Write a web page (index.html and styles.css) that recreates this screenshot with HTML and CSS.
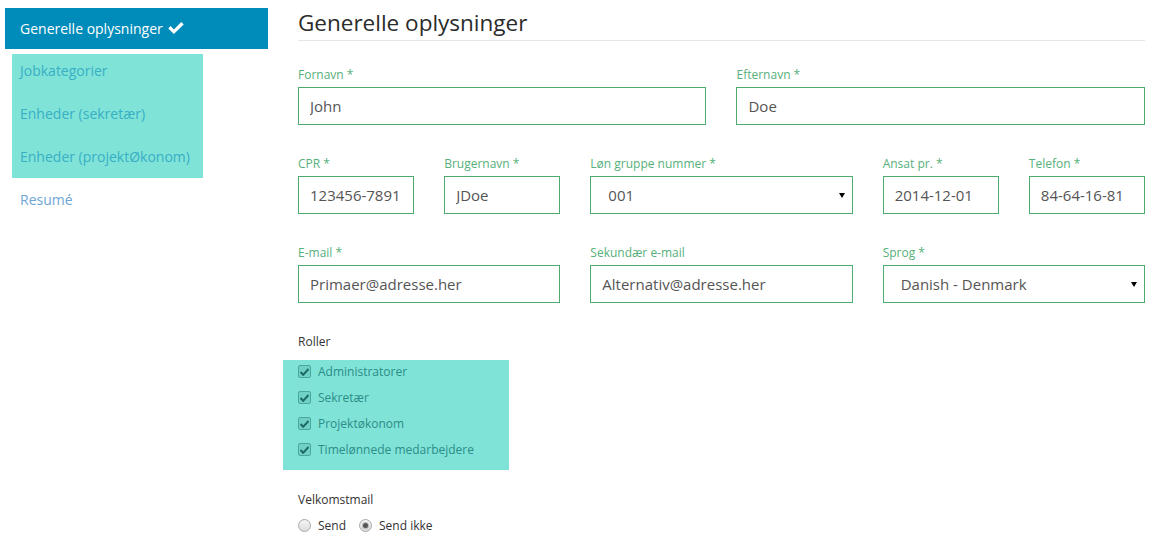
FILE: index.html
```html
<!DOCTYPE html>
<html lang="da">
<head>
<meta charset="utf-8">
<title>Generelle oplysninger</title>
<link rel="stylesheet" href="styles.css">
</head>
<body>
<div class="page">
  <nav class="sidebar">
    <a class="nav-item active">Generelle oplysninger<svg class="check" width="16" height="12" viewBox="0 0 16 12"><path d="M0.3 6.4 L2.6 4.1 L5.9 7.4 L13.3 0 L15.7 2.4 L5.9 12 Z" fill="#fff"/></svg></a>
    <div class="nav-group">
      <a class="nav-item first">Jobkategorier</a>
      <a class="nav-item">Enheder (sekretær)</a>
      <a class="nav-item">Enheder (projektØkonom)</a>
    </div>
    <a class="nav-item plain">Resumé</a>
  </nav>

  <main class="content">
    <h1 class="title">Generelle oplysninger</h1>

    <div class="form-grid">
      <div class="field span-6"><label class="label">Fornavn *</label><input class="input" value="John"></div>
      <div class="field span-6"><label class="label">Efternavn *</label><input class="input" value="Doe"></div>

      <div class="field span-2"><label class="label">CPR *</label><input class="input" value="123456-7891"></div>
      <div class="field span-2"><label class="label">Brugernavn *</label><input class="input" value="JDoe"></div>
      <div class="field span-4"><label class="label">Løn gruppe nummer *</label>
        <div class="select-wrap"><select class="select"><option>001</option></select><span class="arrow"></span></div>
      </div>
      <div class="field span-2"><label class="label">Ansat pr. *</label><input class="input" value="2014-12-01"></div>
      <div class="field span-2"><label class="label">Telefon *</label><input class="input" value="84-64-16-81"></div>

      <div class="field span-4"><label class="label">E-mail *</label><input class="input" value="Primaer@adresse.her"></div>
      <div class="field span-4"><label class="label">Sekundær e-mail</label><input class="input" value="Alternativ@adresse.her"></div>
      <div class="field span-4"><label class="label">Sprog *</label>
        <div class="select-wrap"><select class="select"><option>Danish - Denmark</option></select><span class="arrow"></span></div>
      </div>
    </div>

    <div class="section-label roles-label">Roller</div>
    <div class="roles">
      <div class="role"><span class="cb"><svg width="9" height="8" viewBox="0 0 9 8"><path d="M0.5 4 L3.2 6.8 L8.5 1" fill="none" stroke="#1d6a65" stroke-width="2"/></svg></span>Administratorer</div>
      <div class="role"><span class="cb"><svg width="9" height="8" viewBox="0 0 9 8"><path d="M0.5 4 L3.2 6.8 L8.5 1" fill="none" stroke="#1d6a65" stroke-width="2"/></svg></span>Sekretær</div>
      <div class="role"><span class="cb"><svg width="9" height="8" viewBox="0 0 9 8"><path d="M0.5 4 L3.2 6.8 L8.5 1" fill="none" stroke="#1d6a65" stroke-width="2"/></svg></span>Projektøkonom</div>
      <div class="role"><span class="cb"><svg width="9" height="8" viewBox="0 0 9 8"><path d="M0.5 4 L3.2 6.8 L8.5 1" fill="none" stroke="#1d6a65" stroke-width="2"/></svg></span>Timelønnede medarbejdere</div>
    </div>

    <div class="section-label mail-label">Velkomstmail</div>
    <div class="radios">
      <span class="radio"></span><span class="radio-text">Send</span>
      <span class="radio checked"></span><span class="radio-text">Send ikke</span>
    </div>
  </main>
</div>
</body>
</html>
```

FILE: styles.css
```css
* { box-sizing: border-box; }

html, body {
  margin: 0;
  padding: 0;
  background: #ffffff;
  font-family: "Open Sans", "Noto Sans", sans-serif;
  color: #333333;
}

.page {
  display: flex;
  align-items: flex-start;
}

/* Sidebar */
.sidebar {
  width: 263px;
  margin-left: 5px;
  margin-top: 8px;
  display: flex;
  flex-direction: column;
}

.nav-item {
  display: block;
  font-size: 14px;
  line-height: 20px;
  padding: 12px 15px 11px;
  color: #6ea5d6;
  text-decoration: none;
  white-space: nowrap;
}

.nav-item.active {
  background: #008cba;
  color: #ffffff;
  padding: 11px 15px 10px;
}

.check {
  margin-left: 5px;
  vertical-align: baseline;
}

.nav-group {
  margin: 5px 0 0 7px;
  width: 191px;
  background: #80e3d8;
}

.nav-group .nav-item {
  padding-left: 8px;
  color: #38afc5;
}

.nav-group .nav-item.first {
  padding-top: 7px;
}

/* Main */
.content {
  width: 847px;
  margin-left: 30px;
}

.title {
  margin: 8px 0 0;
  font-size: 22.5px;
  line-height: 30px;
  font-weight: 400;
  color: #2b2b2b;
  padding-bottom: 2px;
  border-bottom: 1px solid #e6e6e6;
}

.form-grid {
  margin-top: 23px;
  display: grid;
  grid-template-columns: repeat(12, 1fr);
  column-gap: 30px;
  row-gap: 28px;
}

.span-2 { grid-column: span 2; }
.span-4 { grid-column: span 4; }
.span-6 { grid-column: span 6; }

.field {
  display: flex;
  flex-direction: column;
  min-width: 0;
}

.label {
  font-size: 12px;
  line-height: 17px;
  color: #56b07a;
  padding-top: 2px;
  margin-bottom: 4px;
  white-space: nowrap;
}

.input,
.select {
  width: 100%;
  height: 38px;
  border: 1px solid #4dab70;
  border-radius: 0;
  background: #ffffff;
  font-family: "Open Sans", "Noto Sans", sans-serif;
  font-size: 15px;
  color: #555555;
  outline: none;
  margin: 0;
}

.input {
  padding: 0 11px;
}

.select-wrap {
  position: relative;
}

.select {
  -webkit-appearance: none;
  appearance: none;
  padding: 0 22px 0 17px;
}

.arrow {
  position: absolute;
  right: 8px;
  top: 17px;
  width: 0;
  height: 0;
  border-left: 3px solid transparent;
  border-right: 3px solid transparent;
  border-top: 5px solid #000000;
}

/* Roles */
.section-label {
  font-size: 12px;
  line-height: 17px;
  color: #333333;
}

.roles-label {
  margin-top: 30px;
}

.roles {
  margin-top: 10px;
  margin-left: -15px;
  width: 226px;
  padding: 0 0 6px 15px;
  background: #80e3d8;
}

.role {
  height: 26px;
  padding-bottom: 3px;
  display: flex;
  align-items: center;
  font-size: 12px;
  line-height: 17px;
  color: #2c8d87;
  white-space: nowrap;
}

.cb {
  width: 13px;
  height: 13px;
  margin-right: 7px;
  border: 1px solid #4aa79e;
  border-radius: 2px;
  background: #70d2c6;
  display: flex;
  align-items: center;
  justify-content: center;
  flex: none;
}

.mail-label {
  margin-top: 21px;
}

.radios {
  margin-top: 4px;
  height: 26px;
  display: flex;
  align-items: center;
  font-size: 12px;
  line-height: 17px;
  color: #333333;
}

.radio {
  width: 13px;
  height: 13px;
  border-radius: 50%;
  border: 1px solid #a8a8a8;
  background: linear-gradient(#f6f6f6, #dcdcdc);
  margin-right: 7px;
  flex: none;
  display: flex;
  align-items: center;
  justify-content: center;
}

.radio.checked::after {
  content: "";
  width: 5px;
  height: 5px;
  border-radius: 50%;
  background: #555555;
  box-shadow: 0 0 1px 1px rgba(90, 90, 90, 0.35);
}

.radio-text {
  margin-right: 13px;
}
```
